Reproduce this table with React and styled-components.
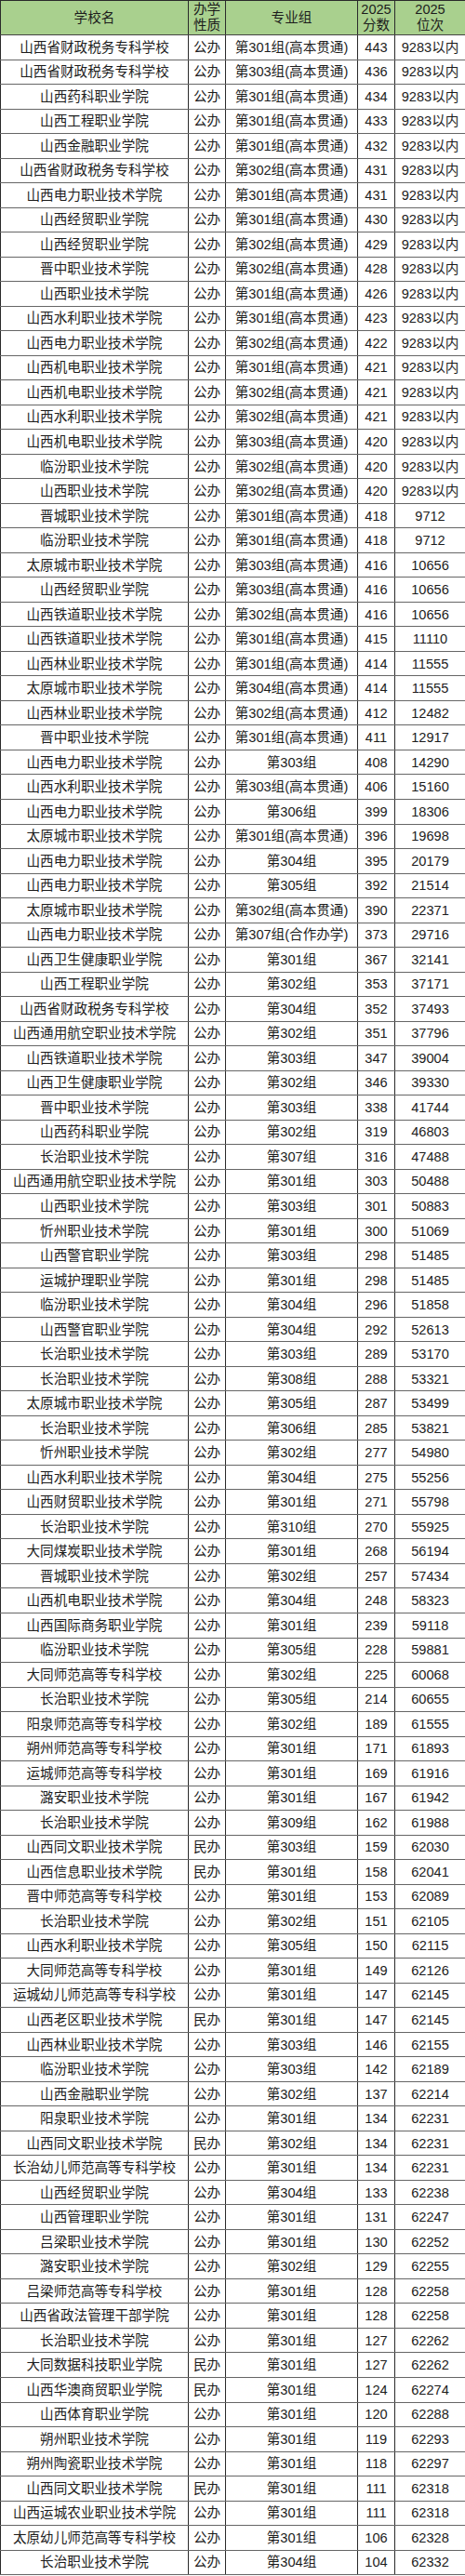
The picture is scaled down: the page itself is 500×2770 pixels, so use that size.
import React from 'react'
import styled, { createGlobalStyle } from 'styled-components'

const GlobalStyle = createGlobalStyle`
    html, body {
        margin: 0;
        padding: 0;
        background: #ffffff;
    }
    body {
        font-family: "Liberation Sans", "Noto Sans CJK SC", sans-serif;
        color: #1c1c1c;
    }
`

// 学校名|办学性质|专业组|分数|位次
const rows = `
山西省财政税务专科学校|公办|第301组(高本贯通)|443|9283以内
山西省财政税务专科学校|公办|第303组(高本贯通)|436|9283以内
山西药科职业学院|公办|第301组(高本贯通)|434|9283以内
山西工程职业学院|公办|第301组(高本贯通)|433|9283以内
山西金融职业学院|公办|第301组(高本贯通)|432|9283以内
山西省财政税务专科学校|公办|第302组(高本贯通)|431|9283以内
山西电力职业技术学院|公办|第301组(高本贯通)|431|9283以内
山西经贸职业学院|公办|第301组(高本贯通)|430|9283以内
山西经贸职业学院|公办|第302组(高本贯通)|429|9283以内
晋中职业技术学院|公办|第302组(高本贯通)|428|9283以内
山西职业技术学院|公办|第301组(高本贯通)|426|9283以内
山西水利职业技术学院|公办|第301组(高本贯通)|423|9283以内
山西电力职业技术学院|公办|第302组(高本贯通)|422|9283以内
山西机电职业技术学院|公办|第301组(高本贯通)|421|9283以内
山西机电职业技术学院|公办|第302组(高本贯通)|421|9283以内
山西水利职业技术学院|公办|第302组(高本贯通)|421|9283以内
山西机电职业技术学院|公办|第303组(高本贯通)|420|9283以内
临汾职业技术学院|公办|第302组(高本贯通)|420|9283以内
山西职业技术学院|公办|第302组(高本贯通)|420|9283以内
晋城职业技术学院|公办|第301组(高本贯通)|418|9712
临汾职业技术学院|公办|第301组(高本贯通)|418|9712
太原城市职业技术学院|公办|第303组(高本贯通)|416|10656
山西经贸职业学院|公办|第303组(高本贯通)|416|10656
山西铁道职业技术学院|公办|第302组(高本贯通)|416|10656
山西铁道职业技术学院|公办|第301组(高本贯通)|415|11110
山西林业职业技术学院|公办|第301组(高本贯通)|414|11555
太原城市职业技术学院|公办|第304组(高本贯通)|414|11555
山西林业职业技术学院|公办|第302组(高本贯通)|412|12482
晋中职业技术学院|公办|第301组(高本贯通)|411|12917
山西电力职业技术学院|公办|第303组|408|14290
山西水利职业技术学院|公办|第303组(高本贯通)|406|15160
山西电力职业技术学院|公办|第306组|399|18306
太原城市职业技术学院|公办|第301组(高本贯通)|396|19698
山西电力职业技术学院|公办|第304组|395|20179
山西电力职业技术学院|公办|第305组|392|21514
太原城市职业技术学院|公办|第302组(高本贯通)|390|22371
山西电力职业技术学院|公办|第307组(合作办学)|373|29716
山西卫生健康职业学院|公办|第301组|367|32141
山西工程职业学院|公办|第302组|353|37171
山西省财政税务专科学校|公办|第304组|352|37493
山西通用航空职业技术学院|公办|第302组|351|37796
山西铁道职业技术学院|公办|第303组|347|39004
山西卫生健康职业学院|公办|第302组|346|39330
晋中职业技术学院|公办|第303组|338|41744
山西药科职业学院|公办|第302组|319|46803
长治职业技术学院|公办|第307组|316|47488
山西通用航空职业技术学院|公办|第301组|303|50488
山西职业技术学院|公办|第303组|301|50883
忻州职业技术学院|公办|第301组|300|51069
山西警官职业学院|公办|第303组|298|51485
运城护理职业学院|公办|第301组|298|51485
临汾职业技术学院|公办|第304组|296|51858
山西警官职业学院|公办|第304组|292|52613
长治职业技术学院|公办|第303组|289|53170
长治职业技术学院|公办|第308组|288|53321
太原城市职业技术学院|公办|第305组|287|53499
长治职业技术学院|公办|第306组|285|53821
忻州职业技术学院|公办|第302组|277|54980
山西水利职业技术学院|公办|第304组|275|55256
山西财贸职业技术学院|公办|第301组|271|55798
长治职业技术学院|公办|第310组|270|55925
大同煤炭职业技术学院|公办|第301组|268|56194
晋城职业技术学院|公办|第302组|257|57434
山西机电职业技术学院|公办|第304组|248|58323
山西国际商务职业学院|公办|第301组|239|59118
临汾职业技术学院|公办|第305组|228|59881
大同师范高等专科学校|公办|第302组|225|60068
长治职业技术学院|公办|第305组|214|60655
阳泉师范高等专科学校|公办|第302组|189|61555
朔州师范高等专科学校|公办|第301组|171|61893
运城师范高等专科学校|公办|第301组|169|61916
潞安职业技术学院|公办|第301组|167|61942
长治职业技术学院|公办|第309组|162|61988
山西同文职业技术学院|民办|第303组|159|62030
山西信息职业技术学院|民办|第301组|158|62041
晋中师范高等专科学校|公办|第301组|153|62089
长治职业技术学院|公办|第302组|151|62105
山西水利职业技术学院|公办|第305组|150|62115
大同师范高等专科学校|公办|第301组|149|62126
运城幼儿师范高等专科学校|公办|第301组|147|62145
山西老区职业技术学院|民办|第301组|147|62145
山西林业职业技术学院|公办|第303组|146|62155
临汾职业技术学院|公办|第303组|142|62189
山西金融职业学院|公办|第302组|137|62214
阳泉职业技术学院|公办|第301组|134|62231
山西同文职业技术学院|民办|第302组|134|62231
长治幼儿师范高等专科学校|公办|第301组|134|62231
山西经贸职业学院|公办|第304组|133|62238
山西管理职业学院|公办|第301组|131|62247
吕梁职业技术学院|公办|第301组|130|62252
潞安职业技术学院|公办|第302组|129|62255
吕梁师范高等专科学校|公办|第301组|128|62258
山西省政法管理干部学院|公办|第301组|128|62258
长治职业技术学院|公办|第301组|127|62262
大同数据科技职业学院|民办|第301组|127|62262
山西华澳商贸职业学院|民办|第301组|124|62274
山西体育职业学院|公办|第301组|120|62288
朔州职业技术学院|公办|第301组|119|62293
朔州陶瓷职业技术学院|公办|第301组|118|62297
山西同文职业技术学院|民办|第301组|111|62318
山西运城农业职业技术学院|公办|第301组|111|62318
太原幼儿师范高等专科学校|公办|第301组|106|62328
长治职业技术学院|公办|第304组|104|62332
`.trim().split('\n').map(line => line.split('|'))

const columns = [
    { title: ['学校名'], width: 202 },
    { title: ['办学', '性质'], width: 40 },
    { title: ['专业组'], width: 142 },
    { title: ['2025', '分数'], width: 40 },
    { title: ['2025', '位次'], width: 76 },
]

const App = () => {
    return (
        <>
            <GlobalStyle />
            <Table>
                <colgroup>
                    {columns.map((col, i) => <col key={i} style={{ width: col.width }} />)}
                </colgroup>
                <thead>
                    <HeadRow>
                        {columns.map((col, i) => (
                            <HeadCell key={i}>
                                {col.title.map((t, j) => <HeadLine key={j}>{t}</HeadLine>)}
                            </HeadCell>
                        ))}
                    </HeadRow>
                </thead>
                <tbody>
                    {rows.map((row, i) => (
                        <Row key={i}>
                            {row.map((value, j) => <Cell key={j}>{value}</Cell>)}
                        </Row>
                    ))}
                </tbody>
            </Table>
        </>
    )
}

const Table = styled.table`
    width: 500px;
    table-layout: fixed;
    border-collapse: collapse;
    font-size: 14.6px;
    border: 1px solid #222;
`

const HeadRow = styled.tr`
    height: 37px;
    background-color: #a9d08e;
`

const HeadCell = styled.th`
    font-weight: normal;
    padding: 0;
    border-left: 1px solid #2a2a2a;
    border-right: 1px solid #2a2a2a;
    border-top: 1px solid #2a2a2a;
    border-bottom: 1px solid #444;
    text-align: center;
    vertical-align: middle;
    line-height: 17px;
`

const HeadLine = styled.div`
    white-space: nowrap;
`

const Row = styled.tr`
    height: 26.53px;
`

const Cell = styled.td`
    padding: 0;
    border-left: 1px solid #2a2a2a;
    border-right: 1px solid #2a2a2a;
    border-top: 1px solid #666;
    border-bottom: 1px solid #666;
    text-align: center;
    vertical-align: middle;
    white-space: nowrap;
    line-height: 18px;
`

export default App
